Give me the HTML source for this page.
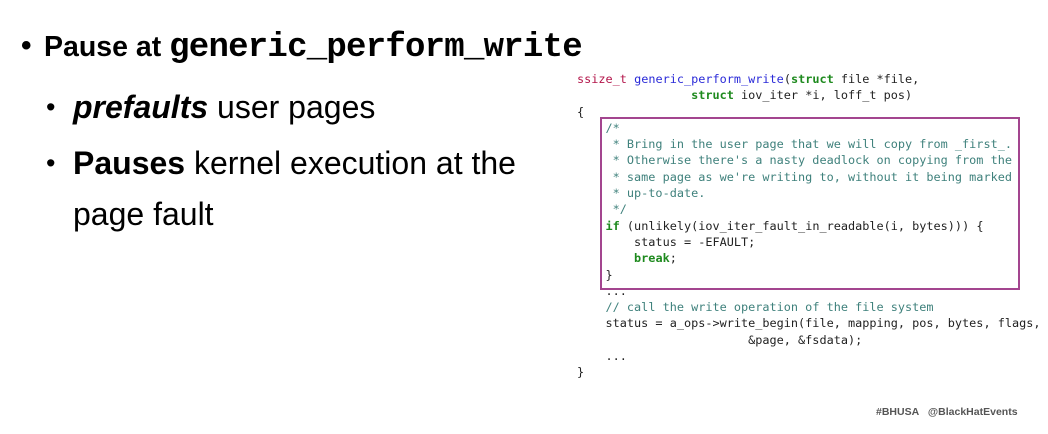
<!DOCTYPE html>
<html><head><meta charset="utf-8"><style>
html,body{margin:0;padding:0;background:#fff;}
body{width:1048px;height:434px;position:relative;overflow:hidden;font-family:"Liberation Sans",Arial,sans-serif;color:#000;}
.t{position:absolute;white-space:nowrap;}
.code{position:absolute;left:577px;top:71px;font-family:"DejaVu Sans Mono","Liberation Mono",monospace;font-size:11.85px;line-height:16.3px;white-space:pre;color:#222;margin:0;}
.r{color:#b3154a;}.b{color:#2a2ad8;}.g{color:#1e8a1e;font-weight:bold;}.c{color:#3f817c;}
.box{position:absolute;left:600px;top:117px;width:416px;height:169px;border:2px solid #a3458f;}
.sb{font-size:32px;line-height:37px;}
</style></head><body>
<div class="t" style="left:21px;top:29px;font-size:30px;font-weight:bold;">•</div>
<div class="t" style="left:44px;top:29px;font-size:28.5px;font-weight:bold;">Pause at <span style="font-family:'Liberation Mono',monospace;font-size:34px;font-weight:bold;letter-spacing:-0.75px">generic_perform_write</span></div>
<div class="t sb" style="left:46px;top:89px;font-size:27px;">•</div>
<div class="t sb" style="left:73px;top:89px;"><b><i>prefaults</i></b> user pages</div>
<div class="t sb" style="left:46px;top:145px;font-size:27px;">•</div>
<div class="t sb" style="left:73px;top:145px;"><b>Pauses</b> kernel execution at the</div>
<div class="t sb" style="left:73px;top:196px;">page fault</div>
<div class="box"></div>
<pre class="code"><span class="r">ssize_t</span> <span class="b">generic_perform_write</span>(<span class="g">struct</span> file *file,
                <span class="g">struct</span> iov_iter *i, loff_t pos)
{
    <span class="c">/*
     * Bring in the user page that we will copy from _first_.
     * Otherwise there's a nasty deadlock on copying from the
     * same page as we're writing to, without it being marked
     * up-to-date.
     */</span>
    <span class="g">if</span> (unlikely(iov_iter_fault_in_readable(i, bytes))) {
        status = -EFAULT;
        <span class="g">break</span>;
    }
    ...
    <span class="c">// call the write operation of the file system</span>
    status = a_ops-&gt;write_begin(file, mapping, pos, bytes, flags,
                        &amp;page, &amp;fsdata);
    ...
}</pre>
<div class="t" style="left:876px;top:406px;font-size:10.5px;font-weight:bold;color:#555;">#BHUSA&nbsp;&nbsp;&nbsp;@BlackHatEvents</div>
</body></html>
